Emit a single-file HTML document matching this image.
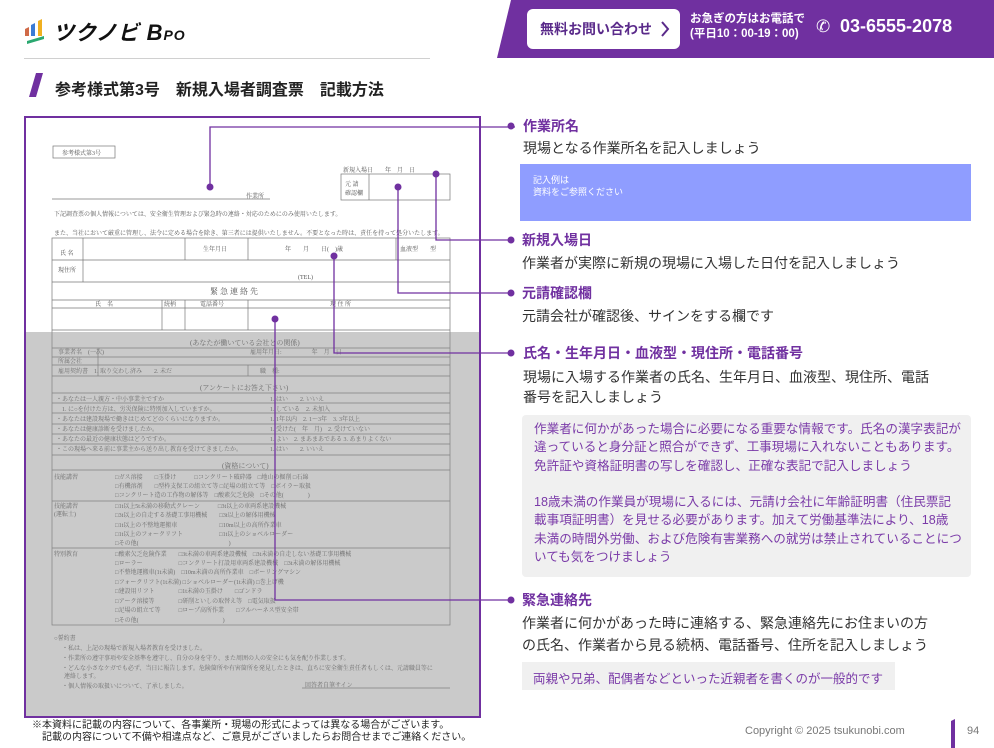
<!DOCTYPE html>
<html><head><meta charset="utf-8">
<style>
*{margin:0;padding:0;box-sizing:border-box}
body{width:994px;height:748px;position:relative;overflow:hidden;background:#fff;font-family:"Liberation Sans","Noto Sans CJK JP",sans-serif;color:#333}
.a{position:absolute;white-space:nowrap}
.h{font-size:14px;font-weight:bold;color:#7030a0}
.d{font-size:14px;color:#333;line-height:20px}
</style></head><body>
<!-- logo -->
<svg class="a" style="left:24px;top:16px" width="24" height="30" viewBox="0 0 24 30">
<path d="M1 13 L5 11 L5 20 L1 20Z" fill="#d06a48"/>
<path d="M7 9 L11 7 L11 20 L7 20Z" fill="#3a7bd5"/>
<path d="M14 5 L18 3 L18 20 L14 20Z" fill="#f0b020"/>
<path d="M3 25 L20 20 L20 23 L3 28Z" fill="#2aa870"/>
</svg>
<div class="a" style="left:53px;top:17px;font-size:21px;font-weight:bold;font-style:italic;color:#111;letter-spacing:1px">ツクノビ <span style="font-size:22px">B</span><span style="font-size:14px">PO</span></div>
<div class="a" style="left:24px;top:58px;width:406px;height:1px;background:#d0d0d0"></div>
<!-- header band -->
<svg class="a" style="left:497px;top:0" width="497" height="58"><path d="M14 0 L497 0 L497 58 L0 58Z" fill="#7030a0"/></svg>
<div class="a" style="left:527px;top:9px;width:153px;height:40px;background:#fff;border-radius:6px"></div>
<div class="a" style="left:540px;top:19px;font-size:14px;font-weight:bold;color:#5a2a8a">無料お問い合わせ</div>
<svg class="a" style="left:660px;top:20px" width="10" height="18"><path d="M2 2 L8 9 L2 16" stroke="#5a2a8a" stroke-width="2" fill="none"/></svg>
<div class="a" style="left:690px;top:12px;font-size:11.5px;font-weight:bold;color:#fff;line-height:15px">お急ぎの方はお電話で<br>(平日10：00-19：00)</div>
<div class="a" style="left:816px;top:17px;font-size:17px;color:#fff">✆</div>
<div class="a" style="left:840px;top:16px;font-size:18px;font-weight:bold;color:#fff">03-6555-2078</div>
<!-- title -->
<svg class="a" style="left:28px;top:73px" width="18" height="25"><path d="M8 0 L15 0 L8 24 L1 24Z" fill="#7030a0"/></svg>
<div class="a" style="left:55px;top:76px;font-size:16px;font-weight:bold;color:#222">参考様式第3号　新規入場者調査票　記載方法</div>

<!-- form -->
<svg class="a" style="left:0;top:0" width="994" height="748" font-family="'Liberation Serif','Noto Serif CJK SC',serif" fill="#555">
<g stroke="#777" stroke-width="0.7" fill="none">
<rect x="53" y="146" width="62" height="12"/>
<line x1="52" y1="199" x2="270" y2="199"/>
<rect x="341" y="174" width="109" height="26"/><line x1="369" y1="174" x2="369" y2="200"/>
<rect x="52" y="238" width="398" height="387"/>
<line x1="52" y1="260" x2="450" y2="260"/><line x1="52" y1="282" x2="450" y2="282"/>
<line x1="52" y1="300" x2="450" y2="300"/><line x1="52" y1="308" x2="450" y2="308"/>
<line x1="52" y1="330" x2="450" y2="330"/><line x1="52" y1="348" x2="450" y2="348"/>
<line x1="52" y1="357" x2="450" y2="357"/><line x1="52" y1="365" x2="450" y2="365"/><line x1="52" y1="376" x2="450" y2="376"/>
<line x1="52" y1="393" x2="450" y2="393"/><line x1="52" y1="403" x2="450" y2="403"/><line x1="52" y1="413" x2="450" y2="413"/><line x1="52" y1="424" x2="450" y2="424"/><line x1="52" y1="434" x2="450" y2="434"/><line x1="52" y1="444" x2="450" y2="444"/><line x1="52" y1="455" x2="450" y2="455"/>
<line x1="52" y1="470" x2="450" y2="470"/><line x1="52" y1="501" x2="450" y2="501"/><line x1="52" y1="548" x2="450" y2="548"/>
<line x1="83" y1="238" x2="83" y2="282"/><line x1="185" y1="238" x2="185" y2="260"/><line x1="248" y1="238" x2="248" y2="260"/><line x1="396" y1="238" x2="396" y2="260"/>
<line x1="162" y1="300" x2="162" y2="330"/><line x1="185" y1="300" x2="185" y2="330"/><line x1="248" y1="300" x2="248" y2="330"/>
<line x1="98" y1="348" x2="98" y2="376"/><line x1="248" y1="365" x2="248" y2="376"/>
<line x1="302" y1="688" x2="450" y2="688"/>
</g>
<g font-size="6">
<text x="62" y="155">参考様式第3号</text>
<text x="246" y="198">作業所</text>
<text x="343" y="172">新規入場日　　年　月　日</text>
<text x="345" y="186">元 請</text><text x="345" y="195">確認欄</text>
<text x="54" y="216">下記調査票の個人情報については、安全衛生管理および緊急時の連絡・対応のためにのみ使用いたします。</text>
<text x="54" y="235">また、当社において厳重に管理し、法令に定める場合を除き、第三者には提供いたしません。不要となった時は、責任を持って処分いたします。</text>
<text x="60" y="255">氏 名</text><text x="203" y="251">生年月日</text><text x="285" y="251">年　　月　　日(　)歳</text><text x="400" y="251">血液型　　型</text>
<text x="58" y="272">現住所</text><text x="298" y="279">(TEL)</text>
<text x="210" y="294" font-size="8">緊 急 連 絡 先</text>
<text x="95" y="306">氏　名</text><text x="164" y="306">続柄</text><text x="200" y="306">電話番号</text><text x="330" y="306">現 住 所</text>
<text x="190" y="345" font-size="7">(あなたが働いている会社との関係)</text>
<text x="58" y="354">事業者名　(一次)</text><text x="250" y="354">雇用年月日:　　　　　年　月　日</text>
<text x="58" y="363">所属会社</text>
<text x="58" y="373">雇用契約書　1. 取り交わし済み　　2. 未だ</text><text x="260" y="373">職　種:</text>
<text x="200" y="390" font-size="7">(アンケートにお答え下さい)</text>
<text x="56" y="401">・あなたは一人親方・中小事業主ですか</text><text x="270" y="401">1. はい　　2. いいえ</text>
<text x="62" y="411">1. に○を付けた方は、労災保険に特別加入していますか。</text><text x="270" y="411">1. している　2. 未加入</text>
<text x="56" y="421">・あなたは建設現場で働きはじめてどのくらいになりますか。</text><text x="270" y="421">1. 1年以内　2. 1〜3年　3. 3年以上</text>
<text x="56" y="431">・あなたは健康診断を受けましたか。</text><text x="270" y="431">1. 受けた(　年　月)　2. 受けていない</text>
<text x="56" y="441">・あなたの最近の健康状態はどうですか。</text><text x="270" y="441">1. よい　2. まあまあである 3. あまりよくない</text>
<text x="56" y="451">・この現場へ来る前に事業主から送り出し教育を受けてきましたか。</text><text x="270" y="451">1. はい　　2. いいえ</text>
<text x="222" y="468" font-size="7">(資格について)</text>
<text x="54" y="479">技能講習</text><text x="115" y="479">□ガス溶接　　□玉掛け　　　□コンクリート破砕器　□地山の掘削 □石綿</text>
<text x="115" y="488">□有機溶剤　　□型枠支保工の組立て等 □足場の組立て等　□ボイラー取扱</text>
<text x="115" y="497">□コンクリート造の工作物の解体等　□酸素欠乏危険　□その他(　　　　)</text>
<text x="54" y="508">技能講習</text><text x="54" y="516">(運転士)</text>
<text x="115" y="508">□1t以上5t未満の移動式クレーン　　　□3t以上の車両系建設機械</text>
<text x="115" y="517">□3t以上の自走する基礎工事用機械　　□3t以上の解体用機械</text>
<text x="115" y="527">□1t以上の不整地運搬車　　　　　　　□10m以上の高所作業車</text>
<text x="115" y="536">□1t以上のフォークリフト　　　　　　□1t以上のショベルローダー</text>
<text x="115" y="545">□その他(　　　　　　　　　　　　　　　)</text>
<text x="54" y="556">特別教育</text>
<text x="115" y="556">□酸素欠乏危険作業　　□3t未満の車両系建設機械　□3t未満の自走しない基礎工事用機械</text>
<text x="115" y="565">□ローラー　　　　　　□コンクリート打設用車両系建設機械　□3t未満の解体用機械</text>
<text x="115" y="574">□不整地運搬車(1t未満)　□10m未満の高所作業車　□ボーリングマシン</text>
<text x="115" y="584">□フォークリフト(1t未満) □ショベルローダー(1t未満) □巻上げ機</text>
<text x="115" y="593">□建設用リフト　　　　□1t未満の玉掛け　　□ゴンドラ</text>
<text x="115" y="603">□アーク溶接等　　　　□研削といしの取替え等　□電気取扱</text>
<text x="115" y="612">□足場の組立て等　　　□ロープ高所作業　　□フルハーネス型安全帯</text>
<text x="115" y="622">□その他(　　　　　　　　　　　　　　)</text>
<text x="54" y="640">○誓約書</text>
<text x="62" y="650">・私は、上記の現場で新規入場者教育を受けました。</text>
<text x="62" y="660">・作業所の遵守事項や安全基準を遵守し、自分の身を守り、また周囲の人の安全にも気を配り作業します。</text>
<text x="62" y="670">・どんな小さなケガでも必ず、当日に報告します。危険箇所や有害箇所を発見したときは、直ちに安全衛生責任者もしくは、元請職員等に</text>
<text x="64" y="678">連絡します。</text>
<text x="62" y="688">・個人情報の取扱いについて、了承しました。</text><text x="305" y="687">回答者自筆サイン</text>
</g>
<rect x="25" y="332" width="455" height="384" fill="#8a8a8a" fill-opacity="0.45"/>
<rect x="25" y="117" width="455" height="600" fill="none" stroke="#7030a0" stroke-width="2"/>
<g stroke="#7030a0" stroke-width="1.3" fill="none">
<path d="M210 187 V127 H515"/>
<path d="M436 174 V240 H513"/>
<path d="M398 187 V293 H513"/>
<path d="M334 256 V353 H513"/>
<path d="M275 319 V600 H513"/>
</g>
<g fill="#7030a0">
<circle cx="210" cy="187" r="3.5"/><circle cx="436" cy="174" r="3.5"/><circle cx="398" cy="187" r="3.5"/><circle cx="334" cy="256" r="3.5"/><circle cx="275" cy="319" r="3.5"/>
<circle cx="511" cy="126" r="3.5"/><circle cx="511" cy="240" r="3.5"/><circle cx="511" cy="293" r="3.5"/><circle cx="511" cy="353" r="3.5"/><circle cx="511" cy="600" r="3.5"/>
</g>
</svg>

<!-- right column -->
<div class="a h" style="left:523px;top:116px">作業所名</div>
<div class="a d" style="left:523px;top:138px">現場となる作業所名を記入しましょう</div>
<div class="a" style="left:520px;top:164px;width:451px;height:57px;background:#8f9dff"></div>
<div class="a" style="left:533px;top:174px;font-size:9px;color:#fff;line-height:12px">記入例は<br>資料をご参照ください</div>
<div class="a h" style="left:522px;top:230px">新規入場日</div>
<div class="a d" style="left:522px;top:253px">作業者が実際に新規の現場に入場した日付を記入しましょう</div>
<div class="a h" style="left:522px;top:283px">元請確認欄</div>
<div class="a d" style="left:522px;top:306px">元請会社が確認後、サインをする欄です</div>
<div class="a h" style="left:523px;top:343px">氏名・生年月日・血液型・現住所・電話番号</div>
<div class="a d" style="left:523px;top:367px">現場に入場する作業者の氏名、生年月日、血液型、現住所、電話<br>番号を記入しましょう</div>
<div class="a" style="left:522px;top:415px;width:449px;height:162px;background:#f0f0f0;border-radius:4px"></div>
<div class="a" style="left:534px;top:420px;font-size:12.6px;color:#7a3aa8;line-height:18.3px">作業者に何かがあった場合に必要になる重要な情報です。氏名の漢字表記が<br>違っていると身分証と照合ができず、工事現場に入れないこともあります。<br>免許証や資格証明書の写しを確認し、正確な表記で記入しましょう<br><br>18歳未満の作業員が現場に入るには、元請け会社に年齢証明書（住民票記<br>載事項証明書）を見せる必要があります。加えて労働基準法により、18歳<br>未満の時間外労働、および危険有害業務への就労は禁止されていることにつ<br>いても気をつけましょう</div>
<div class="a h" style="left:522px;top:590px">緊急連絡先</div>
<div class="a d" style="left:522px;top:612px;line-height:22px">作業者に何かがあった時に連絡する、緊急連絡先にお住まいの方<br>の氏名、作業者から見る続柄、電話番号、住所を記入しましょう</div>
<div class="a" style="left:522px;top:662px;width:373px;height:28px;background:#f0f0f0"></div>
<div class="a" style="left:533px;top:668px;font-size:12.5px;color:#7a3aa8">両親や兄弟、配偶者などといった近親者を書くのが一般的です</div>

<!-- footer -->
<div class="a" style="left:32px;top:720px;font-size:10px;color:#222;line-height:12px">※本資料に記載の内容について、各事業所・現場の形式によっては異なる場合がございます。<br>　記載の内容について不備や相違点など、ご意見がございましたらお問合せまでご連絡ください。</div>
<div class="a" style="left:745px;top:725px;font-size:11px;color:#777">Copyright © 2025 tsukunobi.com</div>
<svg class="a" style="left:949px;top:719px" width="8" height="29"><path d="M2 2 L6 0 L6 29 L2 29Z" fill="#7030a0"/></svg>
<div class="a" style="left:967px;top:725px;font-size:11px;color:#777">94</div>
</body></html>
